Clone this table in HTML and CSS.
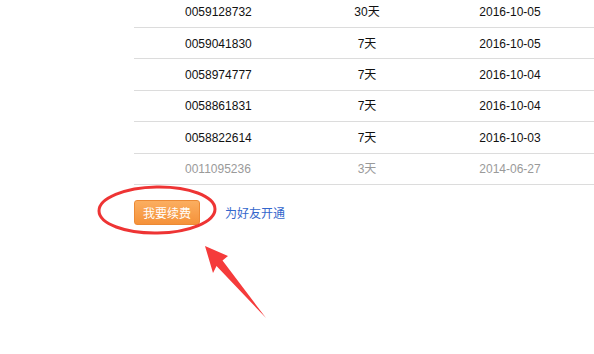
FILE: index.html
```html
<!DOCTYPE html>
<html>
<head>
<meta charset="utf-8">
<link rel="stylesheet" href="styles.css">
</head>
<body>
<div class="page">
  <div class="records">
    <div class="row"><span class="id">0059128732</span><span class="days">30天</span><span class="date">2016-10-05</span></div>
    <div class="row"><span class="id">0059041830</span><span class="days">7天</span><span class="date">2016-10-05</span></div>
    <div class="row"><span class="id">0058974777</span><span class="days">7天</span><span class="date">2016-10-04</span></div>
    <div class="row"><span class="id">0058861831</span><span class="days">7天</span><span class="date">2016-10-04</span></div>
    <div class="row"><span class="id">0058822614</span><span class="days">7天</span><span class="date">2016-10-03</span></div>
    <div class="row expired"><span class="id">0011095236</span><span class="days">3天</span><span class="date">2014-06-27</span></div>
  </div>
  <div class="actions">
    <button class="renew">我要续费</button>
    <a class="gift" href="#">为好友开通</a>
  </div>
</div>
<svg class="annot" width="594" height="354" viewBox="0 0 594 354">
  <ellipse cx="157" cy="210" rx="58" ry="23" fill="none" stroke="#ee3434" stroke-width="3" transform="rotate(-1 157 210)"/>
  <path d="M205 246 L228 256 L222.5 260.5 L266 318 L216.5 266 L213 273 Z" fill="#f53b3b"/>
</svg>
</body>
</html>
```
FILE: styles.css
```css
html, body {
  margin: 0;
  padding: 0;
  background: #fff;
}
body {
  width: 594px;
  height: 354px;
  overflow: hidden;
  position: relative;
  font-family: "Liberation Sans", Arial, "Noto Sans CJK SC", sans-serif;
  font-size: 12px;
  color: #111;
}
.page {
  padding-left: 134px;
}
.records {
  margin-top: -3.4px;
}
.row {
  display: grid;
  grid-template-columns: 162px 142px 144px 1fr;
  height: 31.4px;
  box-sizing: border-box;
  border-bottom: 1px solid #dcdcdc;
  align-items: center;
  line-height: 14px;
}
.row .id {
  padding-left: 51px;
  padding-top: 1px;
}
.row .days, .row .date {
  text-align: center;
  padding-top: 1px;
}
.row.expired {
  color: #9a9a9a;
}
.actions {
  display: flex;
  align-items: center;
  gap: 25px;
  margin-top: 15px;
}
.renew {
  width: 66px;
  height: 25px;
  box-sizing: border-box;
  border: 1px solid #ec8a35;
  border-radius: 3px;
  background: linear-gradient(#fbae60, #f5923a);
  color: #fff;
  font-family: "Noto Sans CJK SC", sans-serif;
  font-size: 12px;
  padding: 0;
  line-height: 23px;
}
.gift {
  color: #3366cc;
  text-decoration: none;
  font-family: "Noto Sans CJK SC", sans-serif;
  font-size: 12px;
}
.annot {
  position: absolute;
  left: 0;
  top: 0;
  pointer-events: none;
}
```
